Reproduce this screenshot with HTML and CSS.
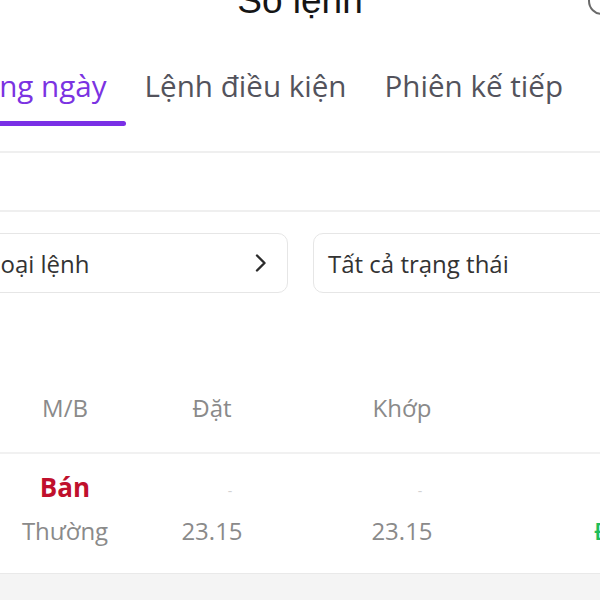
FILE: index.html
```html
<!DOCTYPE html>
<html lang="vi">
<head>
    <meta charset="UTF-8">
    <meta name="viewport" content="width=device-width, initial-scale=1.0">
    <title>Sổ lệnh</title>
    <link rel="stylesheet" href="styles.css">
</head>
<body>

<div class="screen">
    <header class="topbar">
        <span></span>
        <h1 class="title">Sổ lệnh</h1>
        <svg class="history-icon" width="30" height="30" viewBox="0 0 30 30">
            <circle cx="16" cy="15" r="13" fill="none" stroke="#6a6a6a" stroke-width="2"/>
            <path d="M16 8 V15 L21 18" fill="none" stroke="#6a6a6a" stroke-width="2" stroke-linecap="round"/>
        </svg>
    </header>

    <nav class="tabs">
        <a class="tab active">Trong ngày</a>
        <a class="tab">Lệnh điều kiện</a>
        <a class="tab">Phiên kế tiếp</a>
        <a class="tab">Lịch sử lệnh</a>
    </nav>

    <div class="search-bar"></div>

    <div class="filters">
        <button class="filter">
            <span>Tất cả loại lệnh</span>
            <svg class="chevron" width="14" height="20" viewBox="0 0 14 20">
                <path d="M3 2.5 L10.5 10 L3 17.5" fill="none" stroke="#2b2b2b" stroke-width="2.4" stroke-linecap="round" stroke-linejoin="round"/>
            </svg>
        </button>
        <button class="filter">
            <span>Tất cả trạng thái</span>
            <svg class="chevron" width="14" height="20" viewBox="0 0 14 20">
                <path d="M3 2.5 L10.5 10 L3 17.5" fill="none" stroke="#2b2b2b" stroke-width="2.4" stroke-linecap="round" stroke-linejoin="round"/>
            </svg>
        </button>
    </div>

    <div class="orders">
        <div class="order-head">
            <span>M/B</span>
            <span>Đặt</span>
            <span>Khớp</span>
            <span></span>
        </div>
        <div class="order-row">
            <div class="cell">
                <span class="side sell">Bán</span>
                <span class="muted">Thường</span>
            </div>
            <div class="cell">
                <span class="dash">-</span>
                <span class="muted">23.15</span>
            </div>
            <div class="cell">
                <span class="dash">-</span>
                <span class="muted">23.15</span>
            </div>
            <div class="cell status">
                <span class="line"></span>
                <span class="matched">Đã khớp</span>
            </div>
        </div>
    </div>

    <div class="summary"></div>
</div>

</body>
</html>
```

FILE: styles.css
```css
body {
    margin: 0;
    overflow: hidden;
    background-color: #fff;
    font-family: "Open Sans", "Noto Sans", sans-serif;
}
.screen {
    width: 820px;
    margin: -21px 0 0 -110px;
}
.topbar {
    display: grid;
    grid-template-columns: 1fr auto 1fr;
    align-items: center;
    height: 44px;
}
.title {
    margin: 0;
    font-family: "Liberation Sans", Arial, sans-serif;
    font-size: 37px;
    font-weight: 400;
    line-height: 44px;
    color: #151515;
}
.history-icon {
    justify-self: end;
    margin-right: 94px;
}
.tabs {
    display: flex;
    padding: 43px 0 0 44px;
    white-space: nowrap;
}
.tab {
    position: relative;
    flex-shrink: 0;
    padding: 0 19px 20px;
    font-size: 29.6px;
    font-weight: 500;
    line-height: 40px;
    color: #53535c;
}
.tab.active {
    color: #7b33e2;
}
.tab.active::after {
    content: "";
    position: absolute;
    left: 0;
    right: 0;
    bottom: 0;
    height: 5px;
    border-radius: 3px;
    background-color: #7a2fe6;
}
.search-bar {
    margin-top: 25px;
    height: 57px;
    border-top: 2px solid #efefef;
    border-bottom: 2px solid #efefef;
}
.filters {
    display: flex;
    gap: 25px;
    padding: 21px 0 20px 17px;
}
.filter {
    display: flex;
    align-items: center;
    justify-content: space-between;
    flex-shrink: 0;
    box-sizing: border-box;
    width: 381px;
    height: 60px;
    padding: 0 19px 0 14px;
    border: 1.5px solid #e6e6e6;
    border-radius: 10px;
    background-color: #fff;
    font-family: inherit;
    font-size: 24px;
    color: #333;
}
.orders {
    padding-left: 110px;
}
.order-head,
.order-row {
    display: grid;
    grid-template-columns: 130px 164px 216px 200px;
    text-align: center;
}
.order-head {
    padding: 79px 0 28px;
    border-bottom: 2px solid #f1f1f1;
    font-size: 24px;
    line-height: 32px;
    color: #8a8a8a;
}
.order-row {
    padding: 17px 0 26px;
}
.cell {
    display: flex;
    flex-direction: column;
    gap: 12px;
    line-height: 32px;
    font-size: 24px;
}
.side {
    font-size: 26px;
    font-weight: 700;
}
.sell {
    color: #c0102c;
}
.muted {
    color: #8a8a8a;
}
.dash {
    height: 32px;
    padding: 4px 0 0 36px;
    box-sizing: border-box;
    font-size: 14px;
    color: #d2d2d2;
}
.status {
    text-align: left;
    padding-left: 84px;
}
.line {
    height: 32px;
}
.matched {
    font-weight: 600;
    color: #1fbd5a;
}
.summary {
    height: 60px;
    border-top: 1px solid #e9e9e9;
    background-color: #f4f4f4;
}
```
